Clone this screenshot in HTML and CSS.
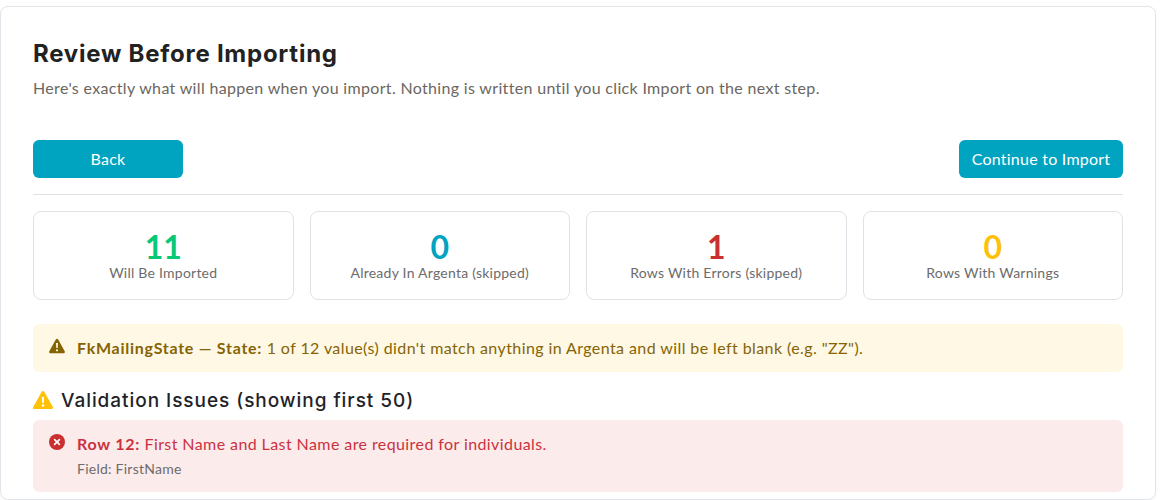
FILE: index.html
```html
<!DOCTYPE html>
<html lang="en">
<head>
<meta charset="utf-8">
<title>Review Before Importing</title>
<link rel="stylesheet" href="styles.css">
</head>
<body>
<main class="card">
  <h1 class="title">Review Before Importing</h1>
  <p class="subtitle">Here's exactly what will happen when you import. Nothing is written until you click Import on the next step.</p>
  <div class="actions">
    <button class="btn btn-back" type="button">Back</button>
    <button class="btn btn-next" type="button">Continue to Import</button>
  </div>
  <section class="stats">
    <div class="stat"><div class="num green">11</div><div class="label">Will Be Imported</div></div>
    <div class="stat"><div class="num teal">0</div><div class="label">Already In Argenta (skipped)</div></div>
    <div class="stat"><div class="num red">1</div><div class="label">Rows With Errors (skipped)</div></div>
    <div class="stat"><div class="num amber">0</div><div class="label">Rows With Warnings</div></div>
  </section>
  <div class="alert alert-warn">
    <svg class="alert-icon" viewBox="0 0 16 16" aria-hidden="true"><path fill="#856404" fill-rule="evenodd" d="M8 .8c.5 0 .9.3 1.2.8l6.5 11.7c.5.9-.1 1.900-1.100 1.900H1.400c-1 0-1.600-1-1.100-1.900L6.800 1.600C7.100 1.100 7.500.8 8 .8zM7 5l.3 5h1.400L9 5H7zm1 6.200a1.100 1.100 0 1 0 0 2.200 1.100 1.100 0 0 0 0-2.200z"/></svg>
    <div><strong>FkMailingState — State:</strong> 1 of 12 value(s) didn't match anything in Argenta and will be left blank (e.g. "ZZ").</div>
  </div>
  <h2 class="issues">
    <svg class="issues-icon" viewBox="0 0 20 18" aria-hidden="true"><path fill="#ffc107" fill-rule="evenodd" d="M10 0c.5 0 1 .3 1.300.8l8.500 15.300c.5 1-.2 1.900-1.200 1.900H1.400C.4 18-.3 17.100.2 16.100L8.700.8C9 .3 9.500 0 10 0zM8.900 6l.3 6h1.600l.3-6H8.900zm1.100 7.200a1.300 1.300 0 1 0 0 2.600 1.300 1.300 0 0 0 0-2.600z"/></svg>
    Validation Issues (showing first 50)
  </h2>
  <div class="alert alert-error">
    <svg class="alert-icon" viewBox="0 0 16 16" aria-hidden="true"><circle cx="8" cy="8" r="8" fill="#c9302f"/><path d="M5.600 5.600l4.800 4.800m0-4.800l-4.800 4.800" stroke="#fff" stroke-width="1.600" stroke-linecap="round"/></svg>
    <div>
      <div><strong>Row 12:</strong> First Name and Last Name are required for individuals.</div>
      <div class="field">Field: FirstName</div>
    </div>
  </div>
</main>
</body>
</html>
```
FILE: styles.css
```css
* { box-sizing: border-box; }
html, body { margin: 0; height: 500px; overflow: hidden; background: #fff; }
body { font-family: "Lato", "Liberation Sans", sans-serif; color: #6c6c6c; padding: 6px 4px 0 0; }
.card { border: 1px solid #e3e3ea; border-radius: 8px; padding: 32px 32px 0; height: 494px; overflow: hidden; box-shadow: 0 1px 3px rgba(0,0,0,.04); }
.title { margin: 0; font-family: "Inter", sans-serif; font-size: 24px; line-height: 30px; font-weight: 700; color: #222; letter-spacing: .75px; }
.subtitle { margin: 7px 0 0; font-size: 16px; line-height: 24px; letter-spacing: .33px; color: #6b6661; }
.actions { display: flex; justify-content: space-between; margin-top: 40px; padding-bottom: 16px; border-bottom: 1px solid #e0e0e6; }
.btn { height: 38px; padding: 0 0 2px; border: 0; border-radius: 6px; background: #00a3c0; color: #fff; font: 400 16px "Lato", sans-serif; letter-spacing: .24px; }
.btn-back { width: 150px; }
.btn-next { width: 164px; }
.stats { display: grid; grid-template-columns: repeat(4, 1fr); gap: 16px; margin-top: 16px; }
.stat { height: 89px; border: 1px solid #e1e1e7; border-radius: 8px; text-align: center; padding-top: 17px; }
.num { font-size: 32px; line-height: 36px; font-weight: 700; }
.label { font-size: 14px; line-height: 16px; letter-spacing: .24px; color: #6c6c6c; }
.green { color: #06c977; }
.teal { color: #00a3c0; }
.red { color: #c9302f; }
.amber { color: #ffc107; }
.alert { display: flex; gap: 12px; border-radius: 6px; padding: 12px 16px; font-size: 16px; line-height: 24px; letter-spacing: .41px; }
.alert strong { letter-spacing: .73px; }
.alert-icon { width: 16px; height: 16px; flex: none; margin-top: 2px; }
.alert-warn { margin-top: 24px; height: 48px; background: #fff8e5; color: #856404; }
.issues { display: flex; align-items: center; gap: 8px; margin: 17px 0 7px; font-family: "Inter", sans-serif; font-size: 19px; line-height: 24px; font-weight: 500; color: #1f2328; letter-spacing: .95px; }
.issues-icon { width: 20px; height: 18px; flex: none; margin-top: -2px; }
.alert-error { height: 72px; background: #fcebeb; color: #cb3240; }
.field { font-size: 14px; line-height: 20px; margin-top: 3px; color: #6c6c6c; letter-spacing: .25px; }
```
